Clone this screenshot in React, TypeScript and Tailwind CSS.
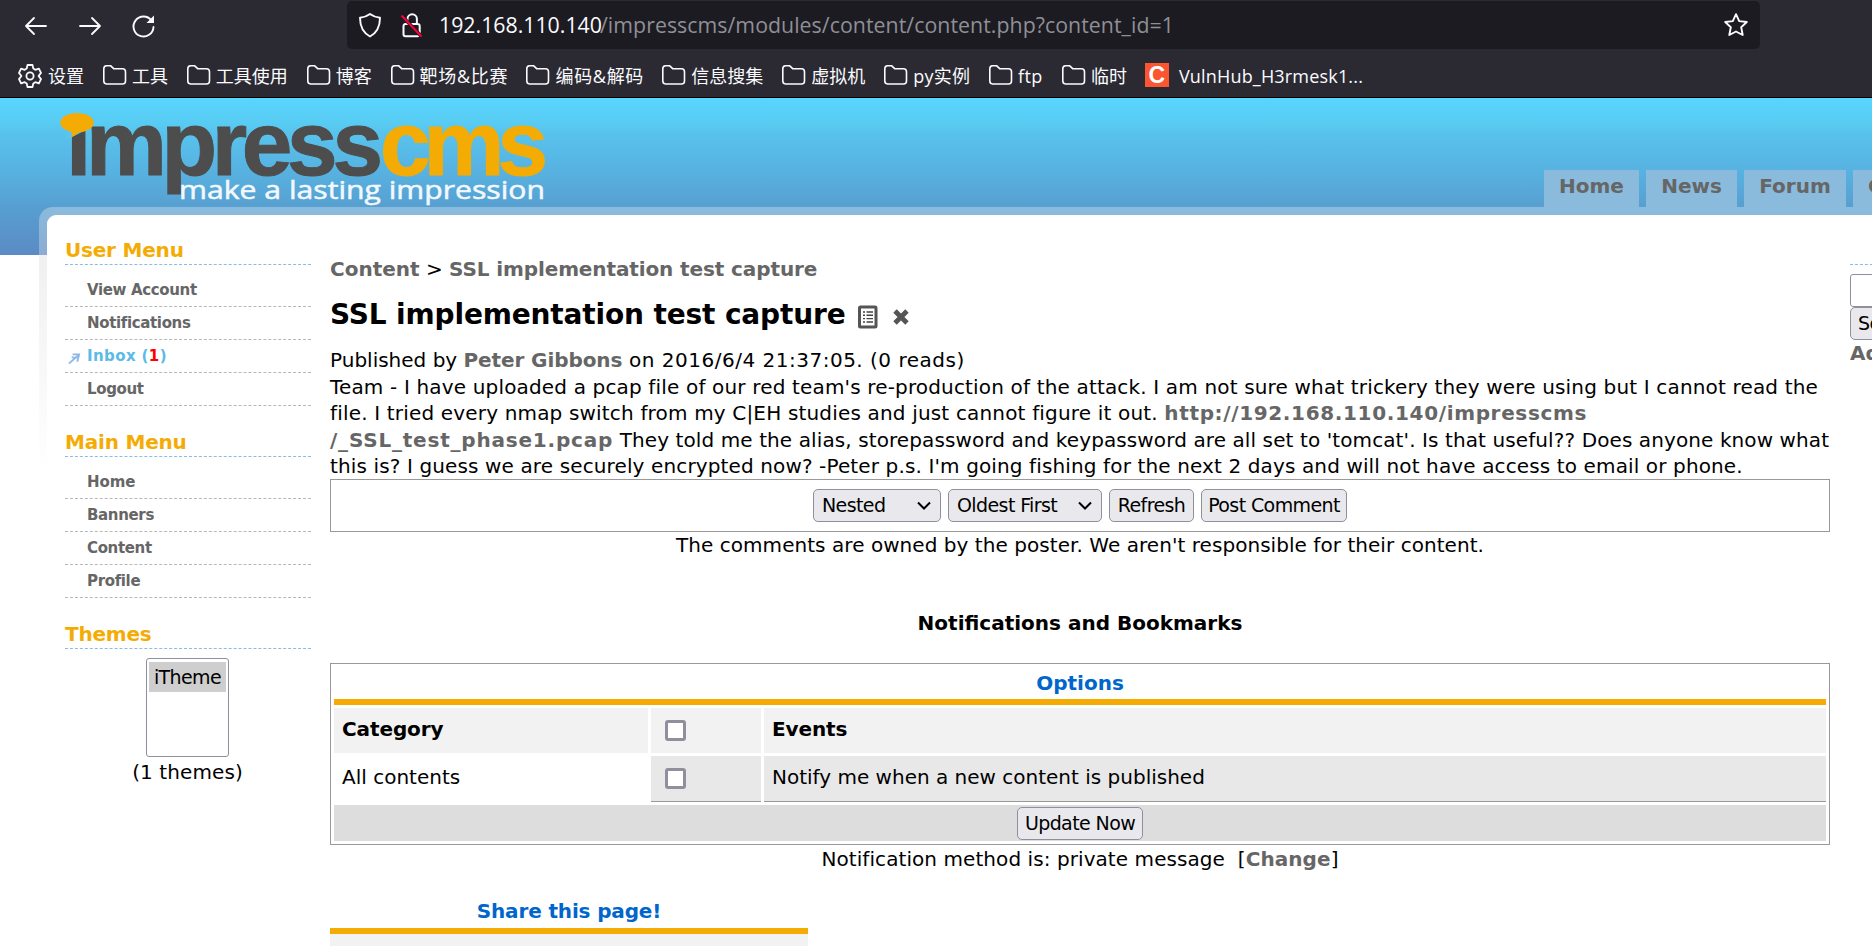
import React from "react";

const folders: [string, string][] = [
  ["工具", "w-[36px]"],
  ["工具使用", "w-[72px]"],
  ["博客", "w-[36px]"],
  ["靶场&比赛", "w-[88px] tracking-[0.7px]"],
  ["编码&解码", "w-[88px] tracking-[0.7px]"],
  ["信息搜集", "w-[72px]"],
  ["虚拟机", "w-[54px]"],
  ["py实例", "w-[57px] tracking-[0.3px]"],
  ["ftp", "w-[25px] tracking-[0.4px]"],
  ["临时", "w-[36px]"],
];

const Folder = () => (
  <svg width="24" height="24" viewBox="0 0 24 24" fill="none" stroke="#fbfbfe" strokeWidth="1.6" className="shrink-0">
    <path d="M3.500 2.800h4.200l3 2.900h8.800a3 3 0 0 1 3 3v9.300a3 3 0 0 1-3 3h-16a3 3 0 0 1-2.700-3v-12.200a3 3 0 0 1 2.700-3z" />
  </svg>
);

function Chrome() {
  return (
    <header className="h-[98px] shrink-0 border-b border-black bg-[#2b2a33] font-['Open_Sans','Noto_Sans_CJK_SC',sans-serif] text-[#fbfbfe]">
      <div className="flex h-[51px] items-start pt-px">
        <div className="flex h-[50px] w-[347px] items-center pl-[24px]">
          <svg width="24" height="24" viewBox="0 0 24 24" fill="none" stroke="#fbfbfe" strokeWidth="1.8" strokeLinecap="round" strokeLinejoin="round">
            <path d="M22 12H2M10 4l-8 8 8 8" />
          </svg>
          <svg className="ml-[30px]" width="24" height="24" viewBox="0 0 24 24" fill="none" stroke="#fbfbfe" strokeWidth="1.8" strokeLinecap="round" strokeLinejoin="round">
            <path d="M2 12h20M14 4l8 8-8 8" />
          </svg>
          <svg className="ml-[29px]" width="26" height="26" viewBox="0 0 26 26" fill="none" stroke="#fbfbfe" strokeWidth="1.9" strokeLinecap="round">
            <path d="M20.500 7.500A10 10 0 1 0 22.500 14" />
            <path d="M23 2.500v7.500h-7.500z" fill="#fbfbfe" stroke="none" />
          </svg>
        </div>
        <div className="flex h-[48px] w-[1413px] items-center rounded-[5px] bg-[#1c1b22] pl-[11px] pr-[11px]">
          <svg width="24" height="26" viewBox="0 0 24 26" fill="none" stroke="#fbfbfe" strokeWidth="1.9" strokeLinejoin="round">
            <path d="M12 2c3.500 2.600 6.500 3.400 10 3.800C22 14 19.500 20.500 12 24.500 4.500 20.500 2 14 2 5.800 5.500 5.400 8.500 4.600 12 2z" />
          </svg>
          <svg className="ml-[18px]" width="24" height="26" viewBox="0 0 24 26" fill="none" stroke="#fbfbfe" strokeWidth="2">
            <path d="M7.500 12V7a4.700 4.700 0 0 1 9.400 0v5M5.500 12h12a2.200 2.200 0 0 1 2.200 2.200v8a2 2 0 0 1-2.200 2h-12a2 2 0 0 1-2-2v-8a2.200 2.200 0 0 1 2-2.200z" />
            <path d="M1.500 3.500l20 21" stroke="#1c1b22" strokeWidth="3.600" />
            <path d="M1.500 3.500l20 21" stroke="#ff0039" />
          </svg>
          <div className="ml-[15px] flex text-[21.300px] leading-[48px] whitespace-nowrap">
            <span className="w-[161px]">192.168.110.140</span>
            <span className="text-[#8f8f96] tracking-[0.05px]">/impresscms/modules/content/content.php?content_id=1</span>
          </div>
          <svg className="ml-auto" width="26" height="26" viewBox="0 0 26 26" fill="none" stroke="#fbfbfe" strokeWidth="1.900" strokeLinejoin="round">
            <path d="M13 2.200l3.200 6.900 7.600.9-5.600 5.200 1.500 7.800L13 19.500l-6.700 3.500 1.500-7.800L2.200 10l7.600-.9z" />
          </svg>
        </div>
      </div>
      <div className="flex h-[46px] items-start pl-[18px] pt-[12px] text-[18px]">
        <svg width="24" height="26" viewBox="0 0 24 26" fill="none" stroke="#fbfbfe" strokeWidth="1.800" strokeLinejoin="round">
          <path d="M9.500 2h5l.8 3.600 2 1.200 3.600-1.100 2.100 4.200-2.400 3.100 2.400 3.100-2.100 4.200-3.600-1.100-2 1.200-.8 3.600h-5l-.8-3.600-2-1.200-3.600 1.100L1 16.100 3.400 13 1 9.900l2.100-4.200 3.600 1.100 2-1.200z" />
          <circle cx="12" cy="13" r="3.600" />
        </svg>
        <span className="ml-[6px] w-[36px] leading-[26px] whitespace-nowrap">设置</span>
        {folders.map(([name, w]) => (
          <div key={name} className="ml-[18.900px] flex">
            <Folder />
            <span className={"ml-[5px] leading-[26px] whitespace-nowrap " + w}>{name}</span>
          </div>
        ))}
        <div className="ml-[18px] flex h-[24px] w-[24px] items-center justify-center bg-[#fc5531] font-['Liberation_Sans'] text-[23px] font-bold text-white">C</div>
        <span className="ml-[10px] leading-[26px] tracking-[0.18px] whitespace-nowrap">VulnHub_H3rmesk1...</span>
      </div>
    </header>
  );
}

function Logo() {
  return (
    <svg width="500" height="103" viewBox="0 0 500 103" className="ml-[55px] mt-[6px] shrink-0">
      <g transform="translate(-55 -104)">
        <g fontFamily="Liberation Sans" fontWeight="700" fontSize="91">
          <text x="66" y="174.800" fill="#4d4d4d" stroke="#4d4d4d" strokeWidth="1" textLength="317">ımpress</text>
          <text x="380" y="174.800" fill="#f4ac04" stroke="#f4ac04" strokeWidth="1" textLength="168">cms</text>
        </g>
        <path d="M66 140l20-10v-6H66z" fill="#58c5ee" />
        <path d="M72 142c2-4 6-6.500 12.800-7.500v10H72z" fill="#4d4d4d" />
        <ellipse cx="77" cy="122.700" rx="16.700" ry="9.700" fill="#f4ac04" />
        <path d="M71 131l9 1c-2 .5-5 4-9.500 5.500 1.500-2 2-4 .5-6.500z" fill="#f4ac04" />
        <text x="179" y="198.500" fill="#f2f8fd" stroke="#f2f8fd" strokeWidth=".5" fontFamily="Open Sans" fontWeight="500" fontSize="25" textLength="366" lengthAdjust="spacingAndGlyphs">make a lasting impression</text>
      </g>
    </svg>
  );
}

const Heading = ({ children }: { children: React.ReactNode }) => (
  <h2 className="h-[26px] border-b border-dashed border-[#8abde6] text-[20px] leading-[23px] font-bold tracking-[-0.2px] text-[#f4ac04]">{children}</h2>
);

const Menu = ({ title, items }: { title: string; items: React.ReactNode[] }) => (
  <section>
    <Heading>{title}</Heading>
    <ul className="mb-[25px] pt-[9px] text-[15px] font-bold tracking-[-0.35px] text-[#666]">
      {items.map((it, i) => (
        <li key={i} className="flex h-[33px] items-center border-b border-dashed border-[#b8b8b8] pl-[22px] leading-[30px]">{it}</li>
      ))}
    </ul>
  </section>
);

const btn = "flex h-[33px] items-center rounded-[5px] border border-[#8f8f9d] bg-[#e9e9ed] text-[19px] tracking-[-0.6px] whitespace-nowrap";

const Chevron = () => (
  <svg className="ml-auto" width="14" height="10" viewBox="0 0 14 10" fill="none" stroke="#000" strokeWidth="2">
    <path d="M1 1.500l6 6 6-6" />
  </svg>
);

const Check = () => <span className="block h-[21px] w-[21px] rounded-[3px] border-[3px] border-[#8f8f9d] bg-white" />;

export default function App() {
  return (
    <div className="flex h-[946px] w-[1872px] flex-col overflow-hidden bg-white font-['DejaVu_Sans',Verdana,sans-serif] text-[20px] text-black">
      <Chrome />
      <div className="flex h-[848px] flex-col bg-[linear-gradient(180deg,#59d5fe_0px,#58cbf2_26px,#58c2ec_36px,#57b1e0_75px,#579fd0_110px,#5b8bc4_157px,#fff_157px)]">
        <div className="flex h-[109px] shrink-0 items-start">
          <Logo />
          <nav className="ml-auto mt-[72px] flex w-[328px] shrink-0 gap-[7px] overflow-hidden font-bold text-[#666]">
            {[["Home", "w-[95px] justify-center"], ["News", "w-[91px] justify-center"], ["Forum", "w-[102px] justify-center"], ["Contact", "w-[120px] pl-[15px]"]].map(([t, w]) => (
              <a key={t} className={"flex h-[37px] shrink-0 bg-[#8abadc] leading-[32px] " + w}>{t}</a>
            ))}
          </nav>
        </div>
        <div className="relative ml-[39px] flex grow flex-col">
          <div className="absolute inset-y-0 left-0 h-[270px] w-[20px] rounded-tl-[14px] bg-[linear-gradient(180deg,#8abadc_0px,#8cabd2_48px,#f0f0f0_48px,#fff_265px)]" />
          <div className="absolute top-0 right-0 left-[14px] h-[8px] bg-[#8abadc]" />
          <div className="relative mt-[8px] ml-[8px] flex grow rounded-tl-[9px] bg-white">
            <aside className="ml-[18px] w-[246px] shrink-0 pt-[24px]">
              <Menu
                title="User Menu"
                items={[
                  "View Account",
                  "Notifications",
                  <span className="relative tracking-[0.4px] text-[#5bbbe6]">
                    <svg className="absolute top-[11px] -left-[19px]" width="13" height="13" viewBox="0 0 14 14" fill="none" stroke="#8fb8ea" strokeWidth="2">
                      <path d="M5 2.500h7l-2 8M11 3.500L1 12.500M4 5.500l5 1" />
                    </svg>
                    Inbox (<span className="text-[#f00]">1</span>)
                  </span>,
                  "Logout",
                ]}
              />
              <Menu title="Main Menu" items={[<span className="tracking-[-0.1px]">Home</span>, "Banners", "Content", "Profile"]} />
              <Heading>Themes</Heading>
              <div className="ml-[81px] mt-[9px] h-[99px] w-[83px] rounded-[3px] border border-[#8f8f9d] px-[2px] pt-[3px]">
                <div className="h-[30px] bg-[#cecece] text-center text-[19px] leading-[31px] tracking-[-0.6px]">iTheme</div>
              </div>
              <p className="mt-[2px] -ml-px text-center leading-[26px] tracking-[0.1px]">(1 themes)</p>
            </aside>
            <main className="ml-[19px] w-[1500px] shrink-0">
              <p className="mt-[41px] leading-[26px] text-black">
                <b className="text-[#666]">Content</b> &gt; <b className="tracking-[-0.11px] text-[#666]">SSL implementation test capture</b>
              </p>
              <div className="mt-[13px] flex h-[40px] items-center">
                <h1 className="text-[28px] leading-[40px] font-bold tracking-[-0.15px] whitespace-nowrap">SSL implementation test capture</h1>
                <svg className="mt-[4px] ml-[12px]" width="20" height="24" viewBox="0 0 20 24">
                  <rect x="1.500" y="2" width="16.500" height="20" rx="1" fill="#fff" stroke="#555" strokeWidth="3" />
                  <path d="M5 7h2M8.500 7h6.500M5 10.300h2M8.500 10.300h6.500M5 13.600h2M8.500 13.600h6.500M5 17h2M8.500 17h6.500" stroke="#444" strokeWidth="1.400" />
                </svg>
                <svg className="mt-[4px] ml-[15px]" width="16" height="16" viewBox="0 0 16 16" stroke="#555" strokeWidth="4.800">
                  <path d="M2 2l12 12M14 2L2 14" />
                </svg>
              </div>
              <div className="mt-[12px] h-[132px] leading-[26.500px] whitespace-nowrap">
                <p>Published by <b className="tracking-[-0.1px] text-[#666]">Peter Gibbons</b><span className="tracking-[0.5px]"> on 2016/6/4 21:37:05. (0 reads)</span></p>
                <p>
                  <span className="tracking-[0.16px]">Team - I have uploaded a pcap file of our red team's re-production of the attack. I am not sure what trickery they were using but I cannot read the</span>
                  <br />
                  <span className="tracking-[0.17px]">file. I tried every nmap switch from my C|EH studies and just cannot figure it out. </span>
                  <b className="tracking-[0.65px] text-[#666]">http://192.168.110.140/impresscms</b>
                  <br />
                  <b className="tracking-[0.8px] text-[#666]">/_SSL_test_phase1.pcap</b>
                  <span className="tracking-[0.1px]"> They told me the alias, storepassword and keypassword are all set to 'tomcat'. Is that useful?? Does anyone know what</span>
                  <br />
                  <span className="tracking-[0.126px]">this is? I guess we are securely encrypted now? -Peter p.s. I'm going fishing for the next 2 days and will not have access to email or phone.</span>
                </p>
              </div>
              <div className="flex h-[53px] items-center justify-center gap-[7px] border border-[#999]">
                <div className={btn + " w-[128px] pr-[9px] pl-[8px]"}>Nested<Chevron /></div>
                <div className={btn + " w-[154px] pr-[9px] pl-[8px]"}>Oldest First<Chevron /></div>
                <div className={btn + " w-[85px] justify-center"}>Refresh</div>
                <div className={btn + " w-[146px] justify-center"}>Post Comment</div>
              </div>
              <p className="text-center leading-[26px] tracking-[0.05px]">The comments are owned by the poster. We aren't responsible for their content.</p>
              <h3 className="mt-[52px] text-center leading-[26px] font-bold">Notifications and Bookmarks</h3>
              <div className="mt-[27px] flex h-[182px] flex-col border border-[#999] px-[3px] pt-[2px]">
                <div className="h-[39px] border-b-[6px] border-[#f4ac04] text-center leading-[34px] font-bold text-[#06c]">Options</div>
                <div className="mt-[3px] flex h-[45px] gap-[3px] font-bold leading-[42px]">
                  <div className="w-[314px] bg-[#f2f2f2] pl-[8px] tracking-[-0.1px]">Category</div>
                  <div className="w-[110px] bg-[#f2f2f2] pt-[12px] pl-[14px]"><Check /></div>
                  <div className="grow bg-[#f2f2f2] pl-[8px] tracking-[-0.1px]">Events</div>
                </div>
                <div className="mt-[3px] flex h-[46px] gap-[3px] leading-[42px]">
                  <div className="w-[314px] pl-[8px]">All contents</div>
                  <div className="w-[110px] border-b border-[#999] bg-[#e8e8e8] pt-[12px] pl-[14px]"><Check /></div>
                  <div className="grow border-b border-[#999] bg-[#e8e8e8] pl-[8px]">Notify me when a new content is published</div>
                </div>
                <div className="mt-[3px] flex h-[36px] items-center justify-center bg-[#ddd]">
                  <div className={btn + " w-[126px] justify-center"}>Update Now</div>
                </div>
              </div>
              <p className="text-center leading-[28px] tracking-[0.07px] whitespace-pre">Notification method is: private message  [<b className="text-[#666]">Change</b>]</p>
              <div className="mt-[24px] w-[478px]">
                <h3 className="h-[37px] border-b-[6px] border-[#f4ac04] text-center leading-[28px] font-bold tracking-[-0.15px] text-[#06c]">Share this page!</h3>
                <div className="h-[40px] bg-[#f2f2f2]" />
              </div>
            </main>
            <div className="ml-[20px] w-[22px] overflow-hidden pt-[49px]">
              <div className="w-[246px]">
                <div className="border-b border-dashed border-[#8abde6]" />
                <div className="mt-[9px] h-[33px] rounded-[3px] border border-[#8f8f9d]" />
                <div className={btn + " w-[80px] pl-[7px]"}>Search</div>
                <p className="leading-[27px] font-bold text-[#666]">Advanced Search</p>
              </div>
            </div>
          </div>
        </div>
      </div>
    </div>
  );
}
